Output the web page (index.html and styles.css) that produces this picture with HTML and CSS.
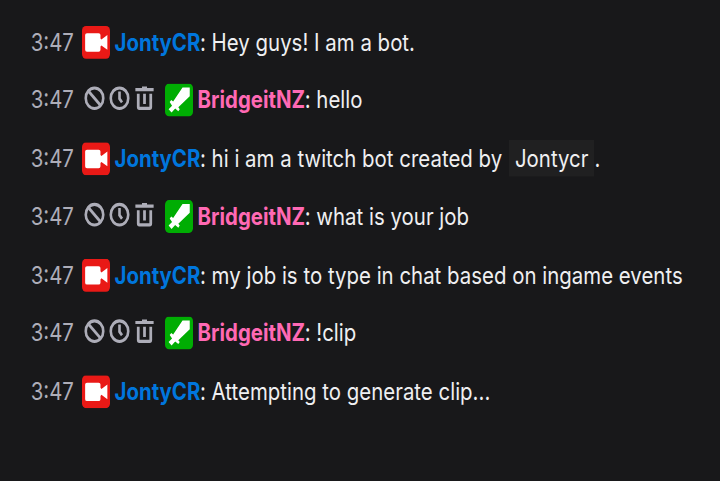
FILE: index.html
```
<!DOCTYPE html>
<html lang="en">
<head>
<meta charset="utf-8">
<title>Chat</title>
<link rel="stylesheet" href="styles.css">
</head>
<body>
<svg class="defs" width="0" height="0" aria-hidden="true">
  <symbol id="camera" viewBox="0 0 18 18"><rect width="18" height="18" fill="#e91916"/><path d="M3.2 4h7.4q1.2 0 1.2 1v1.8l.6.6L16.2 5v8l-3.8-2.4-.6.6v1.8q0 1-1.2 1H3.2Q2 14 2 13V5q0-1 1.2-1z" fill="#fff"/></symbol>
  <symbol id="sword" viewBox="0 0 18 18"><rect width="18" height="18" fill="#00ad03"/><path d="M15.8 2.2v4.7l-7.3 6 .9 1-.9 1.1-2-1.4-2.3 2.1-1.9-1.8L4.5 12 3 10l1-1 1.2.8 6-7.6z" fill="#fff"/></symbol>
  <symbol id="ban" viewBox="0 0 20 20"><circle cx="10" cy="10" r="7" fill="none" stroke="currentColor" stroke-width="2.1"/><path d="M5 5l10 10" stroke="currentColor" stroke-width="2.1"/></symbol>
  <symbol id="clock" viewBox="0 0 20 20"><circle cx="10" cy="10" r="7" fill="none" stroke="currentColor" stroke-width="2.1"/><path d="M10 5.5v4.8l2 2.5" fill="none" stroke="currentColor" stroke-width="2.1"/></symbol>
  <symbol id="trash" viewBox="0 0 20 20"><path d="M8 2h4v1h5.3v2.2H2.7V3H8zM3.9 7h2.2v8.8h7.8V7h2.2v9q0 2-2 2H5.9q-2 0-2-2zM8.9 7h2.2v7H8.9z" fill="currentColor"/></symbol>
</svg>
<main class="chat">
  <div class="line"><span class="time">3:47</span><svg class="badge"><use href="#camera"/></svg><span class="name bot">JontyCR</span><span class="text">: Hey guys! I am a bot.</span></div>
  <div class="line"><span class="time">3:47</span><span class="mod"><svg><use href="#ban"/></svg><svg><use href="#clock"/></svg><svg><use href="#trash"/></svg></span><svg class="badge"><use href="#sword"/></svg><span class="name user">BridgeitNZ</span><span class="text">: hello</span></div>
  <div class="line"><span class="time">3:47</span><svg class="badge"><use href="#camera"/></svg><span class="name bot">JontyCR</span><span class="text">: hi i am a twitch bot created by <span class="mention">Jontycr</span>.</span></div>
  <div class="line"><span class="time">3:47</span><span class="mod"><svg><use href="#ban"/></svg><svg><use href="#clock"/></svg><svg><use href="#trash"/></svg></span><svg class="badge"><use href="#sword"/></svg><span class="name user">BridgeitNZ</span><span class="text">: what is your job</span></div>
  <div class="line"><span class="time">3:47</span><svg class="badge"><use href="#camera"/></svg><span class="name bot">JontyCR</span><span class="text">: my job is to type in chat based on ingame events</span></div>
  <div class="line"><span class="time">3:47</span><span class="mod"><svg><use href="#ban"/></svg><svg><use href="#clock"/></svg><svg><use href="#trash"/></svg></span><svg class="badge"><use href="#sword"/></svg><span class="name user">BridgeitNZ</span><span class="text">: !clip</span></div>
  <div class="line"><span class="time">3:47</span><svg class="badge"><use href="#camera"/></svg><span class="name bot">JontyCR</span><span class="text">: Attempting to generate clip...</span></div>
</main>
</body>
</html>
```
FILE: styles.css
```
html, body {
  margin: 0;
  height: 100%;
  overflow: hidden;
  background: #18181a;
}
.defs { display: block; }
/* Chat text is drawn tall and condensed. */
.chat {
  box-sizing: border-box;
  width: 720px;
  padding: 11px 0 0 30.7px;
  transform: scaleY(1.17647);
  transform-origin: 0 0;
  font: 20.4px/30px Inter, "Liberation Sans", sans-serif;
  color: #efeff1;
}
.line {
  display: flex;
  align-items: center;
  height: 49.5px;
  white-space: pre;
}
.time { width: 51.1px; color: #adadb8; }
.mod { display: flex; margin: -4.4px 8px 0 0; color: #adadb8; }
.mod svg { width: 25px; height: 25px; }
.badge { width: 28.2px; height: 28.2px; margin-right: 4.6px; border-radius: 4px; }
.name { font-weight: 700; }
.bot { color: #0076dd; }
.user { color: #ff69b4; }
.text { margin-left: -.4px; letter-spacing: .02px; }
.mention {
  margin-left: 1px;
  padding: 3px 6px;
  background: #202021;
}
```
